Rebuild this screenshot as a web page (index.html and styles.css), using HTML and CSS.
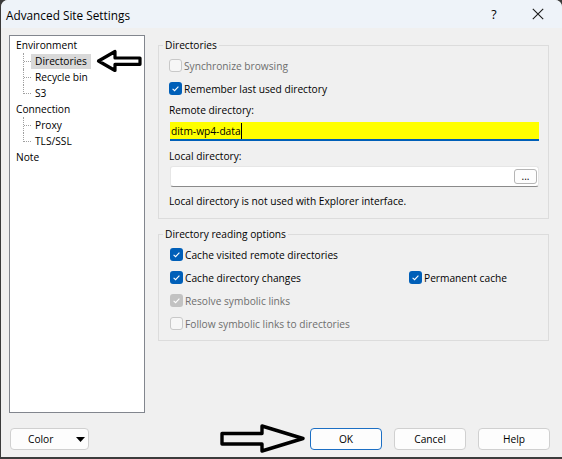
FILE: index.html
```html
<!DOCTYPE html>
<html>
<head>
<meta charset="utf-8">
<link rel="stylesheet" href="styles.css">
</head>
<body>
<div class="window">
  <div class="titlebar">
    <span class="title">Advanced Site Settings</span>
    <span class="tb-btn tb-help">?</span>
    <span class="tb-btn tb-close"><svg width="12" height="12" viewBox="0 0 12 12"><path d="M0.8 0.8L11.2 11.2M11.2 0.8L0.8 11.2" stroke="#1a1a1a" stroke-width="1.1" fill="none"/></svg></span>
  </div>
  <div class="main">
    <div class="tree">
      <div class="node">Environment</div>
      <div class="children">
        <div class="child"><span class="lbl sel">Directories</span></div>
        <div class="child"><span class="lbl">Recycle bin</span></div>
        <div class="child"><span class="lbl">S3</span></div>
      </div>
      <div class="node">Connection</div>
      <div class="children">
        <div class="child"><span class="lbl">Proxy</span></div>
        <div class="child"><span class="lbl">TLS/SSL</span></div>
      </div>
      <div class="node">Note</div>
      <svg class="arrow-left" width="50" height="26" viewBox="0 0 50 26"><path d="M4.5 13 L21 3.5 L21 10 L46 10 L46 16.3 L21 16.3 L21 22.5 Z" fill="none" stroke="#000" stroke-width="3.2" stroke-linejoin="round"/></svg>
    </div>
    <div class="pages">
      <fieldset class="group g-dirs">
        <legend>Directories</legend>
        <div class="cb-row disabled"><span class="cb off"></span><span>Synchronize browsing</span></div>
        <div class="cb-row"><span class="cb on"><svg width="13" height="13" viewBox="0 0 13 13"><path d="M3.6 6.8 L5.6 8.7 L9.4 4.6" stroke="#fff" stroke-width="1.1" fill="none"/></svg></span><span>Remember last used directory</span></div>
        <div class="label">Remote directory:</div>
        <div class="input-yellow"><span class="typed">ditm-wp4-data</span></div>
        <div class="label label-local">Local directory:</div>
        <div class="input-local"><span class="browse">...</span></div>
        <div class="note">Local directory is not used with Explorer interface.</div>
      </fieldset>
      <fieldset class="group g-read">
        <legend>Directory reading options</legend>
        <div class="cb-row"><span class="cb on"><svg width="13" height="13" viewBox="0 0 13 13"><path d="M3.6 6.8 L5.6 8.7 L9.4 4.6" stroke="#fff" stroke-width="1.1" fill="none"/></svg></span><span>Cache visited remote directories</span></div>
        <div class="cb-row">
          <div class="cb-item first"><span class="cb on"><svg width="13" height="13" viewBox="0 0 13 13"><path d="M3.6 6.8 L5.6 8.7 L9.4 4.6" stroke="#fff" stroke-width="1.1" fill="none"/></svg></span><span>Cache directory changes</span></div>
          <div class="cb-item"><span class="cb on"><svg width="13" height="13" viewBox="0 0 13 13"><path d="M3.6 6.8 L5.6 8.7 L9.4 4.6" stroke="#fff" stroke-width="1.1" fill="none"/></svg></span><span>Permanent cache</span></div>
        </div>
        <div class="cb-row disabled"><span class="cb on-dis"><svg width="13" height="13" viewBox="0 0 13 13"><path d="M3.6 6.8 L5.6 8.7 L9.4 4.6" stroke="#fff" stroke-width="1.1" fill="none"/></svg></span><span>Resolve symbolic links</span></div>
        <div class="cb-row disabled"><span class="cb off"></span><span>Follow symbolic links to directories</span></div>
      </fieldset>
    </div>
  </div>
  <div class="footer">
    <div class="btn color-btn"><span>Color</span><svg class="tri" width="9" height="5" viewBox="0 0 9 5"><path d="M0 0 L9 0 L4.5 5 Z" fill="#000"/></svg></div>
    <div class="spacer"></div>
    <div class="btn ok">OK</div>
    <div class="btn">Cancel</div>
    <div class="btn">Help</div>
  </div>
  <svg class="arrow-right" width="94" height="34" viewBox="0 0 94 34"><path d="M6 11.5 L46 11.5 L46 4 L87 16.5 L46 29 L46 22 L6 22 Z" fill="none" stroke="#000" stroke-width="3.4" stroke-linejoin="round"/></svg>
</div>
</body>
</html>
```
FILE: styles.css
```css
html, body {
  margin: 0;
  padding: 0;
  height: 100%;
  background: #3b3b3b;
}
body {
  font-family: "Open Sans", "Liberation Sans", sans-serif;
  font-size: 10.2px;
  color: #000;
  overflow: hidden;
}
.window {
  position: relative;
  width: 561px;
  height: 457px;
  margin-left: 1px;
  background: #f0f0f0;
  border-radius: 7px 7px 0 0;
  display: flex;
  flex-direction: column;
  overflow: hidden;
}
.titlebar {
  height: 28px;
  flex: none;
  background: #eef3f9;
  display: flex;
  align-items: center;
  padding-left: 5px;
  padding-right: 2px;
}
.title {
  flex: 1;
  font-size: 11.8px;
  line-height: 16px;
  padding-top: 1px;
}
.tb-btn {
  width: 44px;
  display: flex;
  justify-content: center;
  align-items: center;
}
.tb-help {
  font-size: 12.5px;
  line-height: 16px;
  padding-top: 1px;
}
.main {
  display: flex;
  padding-top: 7px;
  padding-left: 8px;
}
.tree {
  position: relative;
  width: 136px;
  height: 378px;
  box-sizing: border-box;
  border: 1px solid #82868e;
  background: #fff;
  padding: 1px 0 0 6px;
}
.node {
  height: 16px;
  line-height: 16px;
}
.children {
  margin-left: 7px;
}
.child {
  position: relative;
  height: 16px;
  padding-left: 8px;
  padding-top: 1px;
  box-sizing: border-box;
}
.child::before {
  content: "";
  position: absolute;
  left: 0;
  top: 0;
  bottom: 0;
  border-left: 1px dotted #a0a0a0;
}
.child:last-child::before {
  bottom: 7px;
}
.child::after {
  content: "";
  position: absolute;
  left: 1px;
  top: 8px;
  width: 7px;
  border-top: 1px dotted #a0a0a0;
}
.lbl {
  display: inline-block;
  height: 15px;
  line-height: 15px;
  padding: 0 4px;
}
.sel {
  background: #d9d9d9;
}
.arrow-left {
  position: absolute;
  left: 84px;
  top: 12px;
}
.pages {
  margin-left: 13px;
  margin-top: 2px;
  width: 391px;
}
.group {
  margin: 0;
  border: 1px solid #dcdcdc;
  min-width: 0;
}
.group legend {
  padding: 0 2px;
  height: 16px;
  line-height: 16px;
}
.g-dirs {
  padding: 1px 10px 9px 10px;
}
.g-dirs legend {
  margin-left: -6px;
}
.g-read {
  margin-top: 7px;
  padding: 1px 10px 5px 11px;
}
.g-read legend {
  margin-left: -7px;
}
.cb-row {
  height: 23px;
  display: flex;
  align-items: center;
  line-height: 16px;
}
.cb-item {
  display: flex;
  align-items: center;
}
.cb-item.first {
  width: 239px;
}
.disabled {
  color: #6e6e6e;
}
.cb {
  width: 13px;
  height: 13px;
  box-sizing: border-box;
  border-radius: 3px;
  margin-right: 2px;
  flex: none;
  display: block;
}
.cb svg {
  display: block;
}
.cb.on {
  background: #005fb8;
}
.cb.on-dis {
  background: #c2c2c2;
}
.cb.off {
  border: 1px solid #c8c8c8;
  background: #f6f6f6;
}
.label {
  line-height: 16px;
  margin-top: 2px;
}
.label-local {
  margin-top: 7px;
}
.input-yellow {
  margin: 4px 0 0 1px;
  width: 369px;
  height: 19px;
  box-sizing: border-box;
  background: #ffff00;
  border-bottom: 2px solid #005fb8;
  display: flex;
  align-items: center;
  padding-left: 1px;
}
.typed {
  line-height: 16px;
  border-right: 1px solid #000;
}
.input-local {
  margin: 2px 0 0 1px;
  width: 369px;
  height: 21px;
  box-sizing: border-box;
  background: #fff;
  border: 1px solid #e6e6e6;
  border-bottom-color: #8a8a8a;
  border-radius: 3px;
  display: flex;
  justify-content: flex-end;
  align-items: center;
  padding-right: 1px;
}
.browse {
  width: 23px;
  height: 15px;
  box-sizing: border-box;
  border: 1px solid #b5b5b5;
  border-radius: 3px;
  background: #fdfdfd;
  font-size: 10px;
  line-height: 12px;
  text-align: center;
}
.note {
  margin-top: 6px;
  line-height: 16px;
}
.footer {
  display: flex;
  gap: 12px;
  margin-top: 15px;
  padding-left: 9px;
  padding-right: 12px;
}
.spacer {
  flex: 1;
}
.btn {
  width: 72px;
  height: 22px;
  box-sizing: border-box;
  border: 1px solid #d0d0d0;
  border-radius: 4px;
  background: #fdfdfd;
  display: flex;
  align-items: center;
  justify-content: center;
  line-height: 16px;
}
.btn.ok {
  border-color: #1c6fc4;
}
.color-btn {
  width: 79px;
  justify-content: flex-start;
  padding-left: 17px;
  padding-right: 3px;
}
.color-btn .tri {
  margin-left: auto;
  display: block;
}
.arrow-right {
  position: absolute;
  left: 215px;
  top: 422px;
}
```
